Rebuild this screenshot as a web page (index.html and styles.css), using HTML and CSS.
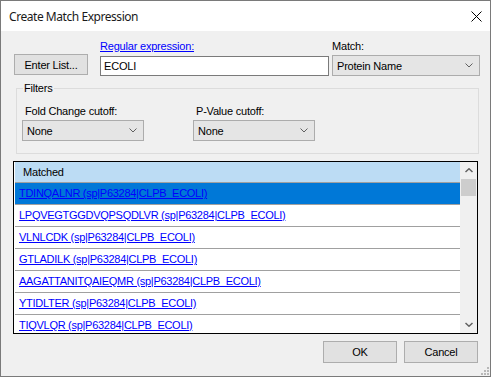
FILE: index.html
```html
<!DOCTYPE html>
<html lang="en">
<head>
  <meta charset="UTF-8">
  <title>Create Match Expression</title>
  <link rel="stylesheet" href="styles.css">
</head>
<body>
  <div class="window">
    <div class="titlebar">
      <span class="title">Create Match Expression</span>
      <svg class="close" width="11" height="11" viewBox="0 0 11 11">
        <path d="M0.5 0.5 L10.5 10.5 M10.5 0.5 L0.5 10.5" stroke="#000" stroke-width="1" fill="none"/>
      </svg>
    </div>

    <div class="content">
      <div class="top-row">
        <div class="button enter-list">Enter List...</div>
        <div class="field regex">
          <div class="label link">Regular expression:</div>
          <div class="textbox">ECOLI</div>
        </div>
        <div class="field match">
          <div class="label">Match:</div>
          <div class="combo">
            <span>Protein Name</span>
            <svg width="8" height="5" viewBox="0 0 8 5"><path d="M0.5 0.5 L4 4 L7.5 0.5" stroke="#606060" fill="none"/></svg>
          </div>
        </div>
      </div>

      <div class="group">
        <span class="group-title">Filters</span>
        <div class="filter">
          <div class="label">Fold Change cutoff:</div>
          <div class="combo">
            <span>None</span>
            <svg width="8" height="5" viewBox="0 0 8 5"><path d="M0.5 0.5 L4 4 L7.5 0.5" stroke="#606060" fill="none"/></svg>
          </div>
        </div>
        <div class="filter">
          <div class="label">P-Value cutoff:</div>
          <div class="combo">
            <span>None</span>
            <svg width="8" height="5" viewBox="0 0 8 5"><path d="M0.5 0.5 L4 4 L7.5 0.5" stroke="#606060" fill="none"/></svg>
          </div>
        </div>
      </div>

      <div class="list">
        <div class="rows">
          <div class="list-header">Matched</div>
          <div class="row selected"><a>TDINQALNR (sp|P63284|CLPB_ECOLI)</a></div>
          <div class="row"><a>LPQVEGTGGDVQPSQDLVR (sp|P63284|CLPB_ECOLI)</a></div>
          <div class="row"><a>VLNLCDK (sp|P63284|CLPB_ECOLI)</a></div>
          <div class="row"><a>GTLADILK (sp|P63284|CLPB_ECOLI)</a></div>
          <div class="row"><a>AAGATTANITQAIEQMR (sp|P63284|CLPB_ECOLI)</a></div>
          <div class="row"><a>YTIDLTER (sp|P63284|CLPB_ECOLI)</a></div>
          <div class="row"><a>TIQVLQR (sp|P63284|CLPB_ECOLI)</a></div>
        </div>
        <div class="scrollbar">
          <div class="arrow">
            <svg width="8" height="5" viewBox="0 0 8 5"><path d="M0.5 4 L4 0.8 L7.5 4" stroke="#606060" stroke-width="1.5" fill="none"/></svg>
          </div>
          <div class="thumb"></div>
          <div class="track"></div>
          <div class="arrow">
            <svg width="8" height="5" viewBox="0 0 8 5"><path d="M0.5 1 L4 4.2 L7.5 1" stroke="#606060" stroke-width="1.5" fill="none"/></svg>
          </div>
        </div>
      </div>

      <div class="actions">
        <div class="button">OK</div>
        <div class="button">Cancel</div>
      </div>
    </div>

    <svg class="grip" width="8" height="8" viewBox="0 0 8 8">
      <rect x="6" y="0" width="2" height="2" fill="#b8b8b8"/>
      <rect x="3" y="3" width="2" height="2" fill="#b8b8b8"/>
      <rect x="6" y="3" width="2" height="2" fill="#b8b8b8"/>
      <rect x="0" y="6" width="2" height="2" fill="#b8b8b8"/>
      <rect x="3" y="6" width="2" height="2" fill="#b8b8b8"/>
      <rect x="6" y="6" width="2" height="2" fill="#b8b8b8"/>
    </svg>
  </div>
</body>
</html>
```

FILE: styles.css
```css
body {
  margin: 0;
  font-family: "Liberation Sans", Arial, sans-serif;
  font-size: 11px;
  letter-spacing: -0.2px;
  color: #000;
}
.window {
  width: 491px;
  height: 377px;
  box-sizing: border-box;
  border: 1px solid #7a7a7a;
  background-color: #f0f0f0;
  position: relative;
}
.titlebar {
  height: 30px;
  background-color: #fff;
  display: flex;
  align-items: center;
  justify-content: space-between;
  padding: 0 8px 0 8px;
}
.title {
  font-family: "Noto Sans", sans-serif;
  font-size: 12px;
  letter-spacing: -0.45px;
  color: #1a1a1a;
}
.content {
  padding: 9px 0 0 12px;
}
.label {
  height: 13px;
  line-height: 13px;
  white-space: nowrap;
}
.link {
  color: #0000ff;
  text-decoration: underline;
}
.top-row {
  display: flex;
}
.button {
  box-sizing: border-box;
  width: 74px;
  border: 1px solid #adadad;
  background-color: #e1e1e1;
  display: flex;
  align-items: center;
  justify-content: center;
}
.enter-list {
  height: 21px;
  margin: 14px 0 0 1px;
}
.regex {
  margin-left: 12px;
}
.textbox {
  box-sizing: border-box;
  width: 229px;
  height: 20px;
  margin-top: 3px;
  border: 1px solid #7a7a7a;
  background-color: #fff;
  padding-left: 3px;
  display: flex;
  align-items: center;
}
.match {
  margin-left: 3px;
}
.combo {
  box-sizing: border-box;
  height: 21px;
  border: 1px solid #acacac;
  background-color: #e5e5e5;
  display: flex;
  align-items: center;
  justify-content: space-between;
  padding: 0 6px 0 4px;
}
.match .combo {
  width: 148px;
  margin-top: 2px;
}
.group {
  position: relative;
  box-sizing: border-box;
  width: 463px;
  height: 66px;
  margin: 12px 0 0 3px;
  border: 1px solid #dcdcdc;
  padding: 16px 0 0 5px;
  display: flex;
  gap: 49px;
}
.group-title {
  position: absolute;
  top: -7px;
  left: 6px;
  padding: 0 1px;
  line-height: 13px;
  background-color: #f0f0f0;
}
.filter .label {
  margin-left: 3px;
}
.filter .combo {
  width: 122px;
  margin-top: 2px;
}
.list {
  box-sizing: border-box;
  width: 465px;
  height: 173px;
  margin-top: 7px;
  border: 1px solid #000;
  background-color: #fff;
  display: flex;
  overflow: hidden;
}
.rows {
  flex: 1;
  padding-left: 1px;
}
.list-header {
  height: 20px;
  line-height: 20px;
  border-bottom: 1px solid #a0a0a0;
  background-color: #bcdcf4;
  padding-left: 8px;
}
.row {
  height: 21px;
  line-height: 21px;
  border-bottom: 1px solid #a0a0a0;
  padding-left: 4px;
  white-space: nowrap;
  letter-spacing: -0.28px;
}
.row a {
  color: #0000ff;
  text-decoration: underline;
}
.row.selected {
  background-color: #0078d7;
}
.scrollbar {
  width: 17px;
  background-color: #f0f0f0;
  display: flex;
  flex-direction: column;
}
.arrow {
  height: 17px;
  display: flex;
  align-items: center;
  justify-content: center;
}
.thumb {
  height: 17px;
  margin: 0 1px;
  background-color: #cdcdcd;
}
.track {
  flex: 1;
}
.actions {
  width: 465px;
  display: flex;
  justify-content: flex-end;
  gap: 7px;
  margin-top: 7px;
}
.actions .button {
  height: 22px;
}
.grip {
  position: absolute;
  right: 1px;
  bottom: 1px;
}
```
